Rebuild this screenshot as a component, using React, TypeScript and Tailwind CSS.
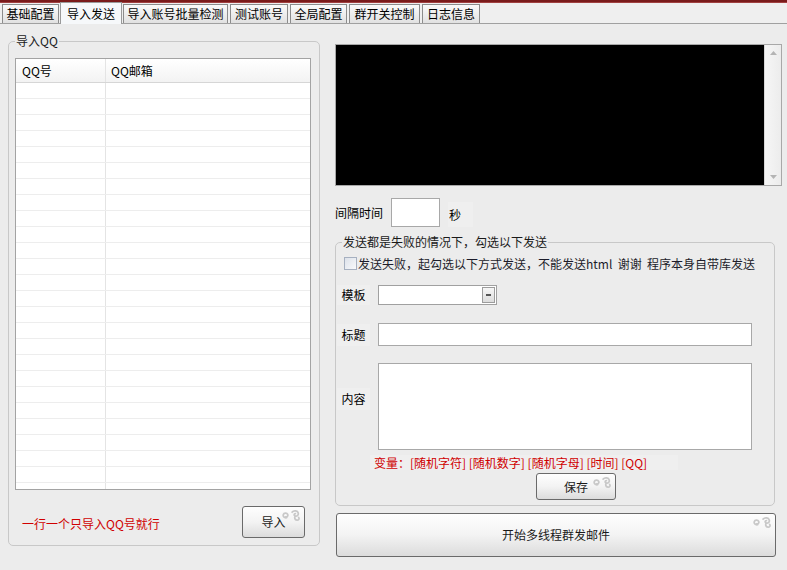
const tabs = [
  { label: '基础配置', cls: 'w-[57px] ml-0' },
  { label: '导入发送', cls: 'w-[62px] ml-px', active: true },
  { label: '导入账号批量检测', cls: 'w-[105px] ml-px' },
  { label: '测试账号', cls: 'w-[58px] ml-[2px]' },
  { label: '全局配置', cls: 'w-[57px] ml-[2px]' },
  { label: '群开关控制', cls: 'w-[71px] ml-[2px]' },
  { label: '日志信息', cls: 'w-[58px] ml-[2px]' },
];

const Swirl = () => (
  <svg width="22" height="17" viewBox="0 0 20 15" className="absolute right-[2px] top-0">
    <path
      d="M6 9.5c-2.2 0.4-3.6-1.2-3-2.8 0.6-1.6 3.2-1.8 4 -0.2 0.6 1.3-0.6 2.6-1.9 2.2"
      stroke="#c8c8c8"
      strokeWidth="1.6"
      fill="none"
      strokeLinecap="round"
    />
    <path
      d="M11 4.5c1.6-1.8 5-1.4 5.6 0.8 0.5 2-1.4 3.4-3 2.6-1.2-0.6-0.8-2.2 0.4-2.1M14 8c-1.2 1.4-0.6 3.6 1.4 3.8 1.6 0.1 2.4-1.4 1.6-2.6"
      stroke="#c8c8c8"
      strokeWidth="1.6"
      fill="none"
      strokeLinecap="round"
    />
  </svg>
);

const WinButton = ({ label, className }: { label: string; className: string }) => (
  <button
    className={`relative flex items-center justify-center rounded-[3px] border border-[#6a6a6a] bg-gradient-to-b from-[#fefefe] via-[#f3f3f3] to-[#dcdcdc] text-[12px] leading-none text-[#1a1a1a] ${className}`}
  >
    <Swirl />
    <span className="relative">{label}</span>
  </button>
);

export default function App() {
  const rows = Array.from({ length: 26 });

  return (
    <div className="w-[787px] h-[570px] overflow-hidden bg-[#ececec] font-['Noto_Sans_CJK_SC',sans-serif] text-[12px] text-black flex flex-col">
      <div className="h-[3px] bg-[#7a1b1b] border-b border-[#a04040]" />

      {/* tab strip */}
      <div className="h-[21px] flex items-end pl-[2px] border-b border-[#a0a0a0] bg-[#efefef]">
        {tabs.map((t) =>
          t.active ? (
            <div
              key={t.label}
              className={`${t.cls} relative z-10 -mb-px h-[22px] flex items-center justify-center border border-b-0 border-[#9a9a9a] bg-[#f6f8fa] leading-none`}
            >
              {t.label}
            </div>
          ) : (
            <div
              key={t.label}
              className={`${t.cls} h-[19px] flex items-center justify-center border border-b-0 border-[#8c8c8c] bg-gradient-to-b from-[#fafafa] to-[#e1e1e1] leading-none`}
            >
              {t.label}
            </div>
          )
        )}
      </div>

      <div className="flex">
        {/* left group */}
        <fieldset className="ml-[8px] mt-[11px] w-[312px] h-[511px] rounded-[5px] border border-[#c8c8c8]">
          <legend className="ml-[6px] px-px leading-[12px] text-[#1a1a1a]">导入QQ</legend>
          <div className="mt-[11px] ml-[6px] w-[296px] h-[432px] overflow-hidden border border-[#a3a3a3] bg-white">
            <div className="h-[24px] flex items-center border-b border-[#d6d6d6] bg-gradient-to-b from-white to-[#f3f3f3]">
              <div className="w-[90px] h-full flex items-center pl-[6px] border-r border-[#e4e4e4]">QQ号</div>
              <div className="pl-[5px]">QQ邮箱</div>
            </div>
            {rows.map((_, i) => (
              <div key={i} className="h-[16px] flex border-b border-[#ededed]">
                <div className="w-[90px] border-r border-[#e4e4e4]" />
              </div>
            ))}
          </div>
          <div className="mt-[16px] flex items-center">
            <span className="ml-[13px] mt-[3px] text-[#d00000]">一行一个只导入QQ号就行</span>
            <WinButton label="导入" className="ml-auto mr-[14px] w-[63px] h-[32px]" />
          </div>
        </fieldset>

        {/* right column */}
        <div className="ml-[15px] w-[447px] flex flex-col">
          <div className="mt-[20px] h-[142px] flex border border-[#a8a8a8]">
            <div className="flex-1 bg-black" />
            <div className="w-[17px] flex flex-col items-center justify-between py-[6px] bg-gradient-to-r from-[#f6f6f6] to-[#ececec] border-l border-[#d8d8d8]">
              <svg width="7" height="4" viewBox="0 0 7 4">
                <path d="M0 4L3.5 0L7 4Z" fill="#b4b4b4" />
              </svg>
              <svg width="7" height="4" viewBox="0 0 7 4">
                <path d="M0 0L3.5 4L7 0Z" fill="#b4b4b4" />
              </svg>
            </div>
          </div>

          <div className="mt-[12px] h-[29px] flex items-center">
            <span className="leading-none">间隔时间</span>
            <div className="ml-[8px] w-[49px] h-[29px] border border-[#a8a8a8] bg-white" />
            <span className="ml-[8px] w-[25px] h-[25px] mt-[4px] flex items-center pl-px bg-[#efefef] leading-none">秒</span>
          </div>

          {/* send group */}
          <fieldset className="mt-[9px] w-[440px] h-[270px] rounded-[5px] border border-[#c8c8c8]">
            <legend className="ml-[6px] px-px leading-[12px] text-[#1a1a1a]">发送都是失败的情况下，勾选以下发送</legend>
            <div className="mt-[9px] ml-[8px] flex items-center">
              <div className="w-[13px] h-[13px] border border-[#a6b0c0] bg-gradient-to-br from-[#dde2ea] to-[#f8f9fb]" />
              <span className="ml-px leading-none text-[#1c1c2a]">发送失败，起勾选以下方式发送，不能发送html&nbsp; 谢谢&nbsp; 程序本身自带库发送</span>
            </div>

            <div className="mt-[15px] flex items-center">
              <span className="ml-px w-[33px] h-[20px] flex items-center justify-center bg-[#efefef] leading-none">模板</span>
              <div className="ml-[8px] w-[119px] h-[20px] flex justify-end items-center pr-px border border-[#a0a0a0] bg-white">
                <div className="w-[13px] h-[16px] flex items-center justify-center border border-[#9c9c9c] bg-gradient-to-b from-[#f6f6f6] to-[#dcdcdc]">
                  <div className="w-[5px] h-[2px] bg-[#555]" />
                </div>
              </div>
            </div>

            <div className="mt-[18px] flex items-center">
              <span className="ml-px w-[33px] h-[22px] flex items-center justify-center bg-[#efefef] leading-none">标题</span>
              <div className="ml-[8px] w-[374px] h-[23px] border border-[#a8a8a8] bg-white" />
            </div>

            <div className="mt-[17px] flex items-start">
              <span className="ml-px mt-[25px] w-[33px] h-[22px] flex items-center justify-center bg-[#efefef] leading-none">内容</span>
              <div className="ml-[8px] w-[374px] h-[87px] border border-[#a8a8a8] bg-white" />
            </div>

            <div className="mt-[5px] ml-[34px] w-[308px] h-[15px] flex items-center pl-[4px] bg-[#efefef] text-[#d00000] leading-none">
              变量：[随机字符] [随机数字] [随机字母] [时间] [QQ]
            </div>

            <WinButton label="保存" className="mt-[3px] ml-[200px] w-[80px] h-[27px]" />
          </fieldset>

          <WinButton label="开始多线程群发邮件" className="mt-[7px] ml-px w-[440px] h-[44px]" />
        </div>
      </div>
    </div>
  );
}
